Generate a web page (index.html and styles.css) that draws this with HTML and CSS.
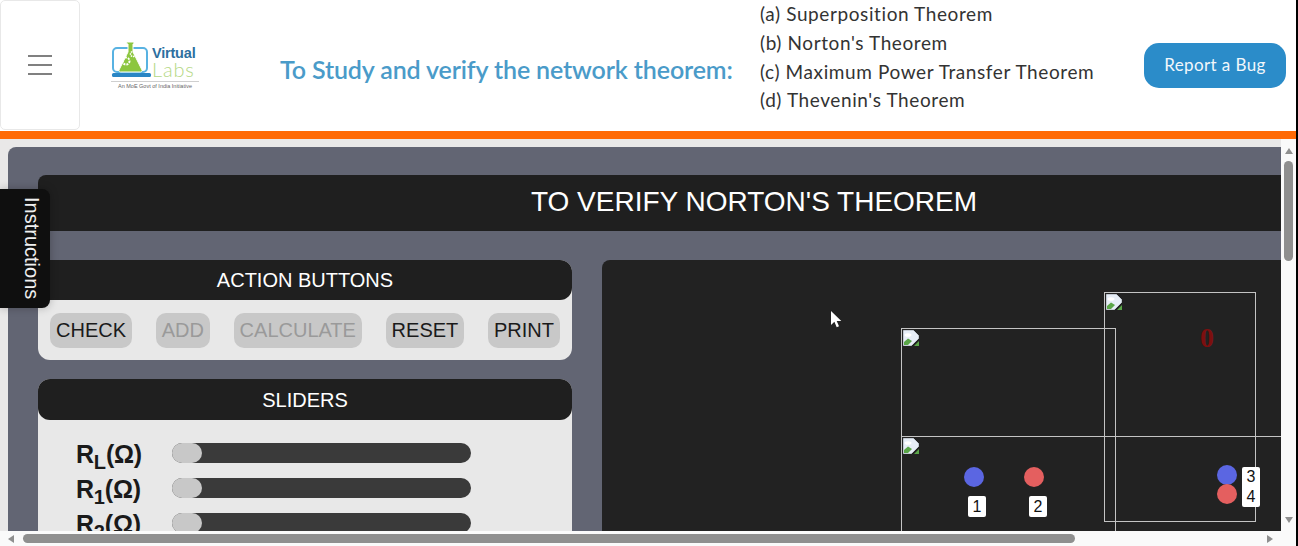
FILE: index.html
```html
<!DOCTYPE html>
<html lang="en">
<head>
    <meta charset="UTF-8">
    <meta name="viewport" content="width=device-width, initial-scale=1.0">
    <title>Virtual Labs - Network Theorems</title>
    <link rel="stylesheet" href="styles.css">
</head>
<body>
    <header class="topbar">
        <button class="menu-btn" aria-label="Menu">
            <span></span><span></span><span></span>
        </button>
        <div class="logo">
            <svg class="logo-mark" width="41" height="36" viewBox="0 0 41 36">
                <rect x="2" y="6" width="34" height="24" rx="4" fill="none" stroke="#58b2e2" stroke-width="2"/>
                <rect x="1" y="31" width="39" height="4" rx="1.500" fill="#2a86c4"/>
                <path d="M15 0h8v2h-1v8l9 18c0.500 1-0.500 2-1.500 2h-20c-1 0-2-1-1.500-2l9-18V2h-1z" fill="#8cc63f" stroke="#fff" stroke-width="1"/>
                <circle cx="15" cy="19" r="3.500" fill="none" stroke="#fff" stroke-width="2" stroke-dasharray="2 1"/>
                <circle cx="22" cy="12" r="2.500" fill="none" stroke="#fff" stroke-width="1.500" stroke-dasharray="1.500 0.800"/>
            </svg>
            <div class="logo-words">
                <span class="logo-virtual">Virtual</span>
                <span class="logo-labs">Labs</span>
            </div>
            <div class="logo-tag">An MoE Govt of India Initiative</div>
        </div>
        <h1 class="exp-title">To Study and verify the network theorem:</h1>
        <ul class="exp-list">
            <li>(a) Superposition Theorem</li>
            <li>(b) Norton's Theorem</li>
            <li>(c) Maximum Power Transfer Theorem</li>
            <li>(d) Thevenin's Theorem</li>
        </ul>
        <a class="bug-btn" href="#">Report a Bug</a>
    </header>
    <div class="orange-line"></div>

    <main class="sim-frame">
        <div class="sim-view">
            <div class="sim-inner">
                <div class="sim-title">TO VERIFY NORTON'S THEOREM</div>
                <div class="sim-cols">
                    <section class="controls">
                        <div class="card">
                            <div class="card-head head-short">ACTION BUTTONS</div>
                            <div class="action-row">
                                <button class="act">CHECK</button>
                                <button class="act off">ADD</button>
                                <button class="act off">CALCULATE</button>
                                <button class="act">RESET</button>
                                <button class="act">PRINT</button>
                            </div>
                        </div>
                        <div class="card">
                            <div class="card-head">SLIDERS</div>
                            <div class="slider-list">
                                <div class="slider-row">
                                    <span class="slider-name">R<sub>L</sub>(Ω)</span>
                                    <div class="track"><div class="thumb"></div></div>
                                </div>
                                <div class="slider-row">
                                    <span class="slider-name">R<sub>1</sub>(Ω)</span>
                                    <div class="track"><div class="thumb"></div></div>
                                </div>
                                <div class="slider-row">
                                    <span class="slider-name">R<sub>2</sub>(Ω)</span>
                                    <div class="track"><div class="thumb"></div></div>
                                </div>
                            </div>
                        </div>
                    </section>

                    <section class="board">
                        <div class="box box-a"><svg class="broken" viewBox="0 0 16 16"><use href="#broken-img"/></svg></div>
                        <div class="box box-b"><svg class="broken" viewBox="0 0 16 16"><use href="#broken-img"/></svg></div>
                        <div class="box box-c"><svg class="broken" viewBox="0 0 16 16"><use href="#broken-img"/></svg></div>
                        <span class="reading">0</span>
                        <span class="pin blue pin-1"></span>
                        <span class="pin red pin-2"></span>
                        <span class="pin blue pin-3"></span>
                        <span class="pin red pin-4"></span>
                        <span class="tag tag-1">1</span>
                        <span class="tag tag-2">2</span>
                        <span class="tag tag-3">3</span>
                        <span class="tag tag-4">4</span>
                        <svg class="cursor" width="12" height="19" viewBox="0 0 12 19">
                            <path d="M1 1v14l3.400-3.200 2.300 5.400 2.300-1-2.300-5.200h4.600z" fill="#fff"/>
                        </svg>
                    </section>
                </div>
            </div>
        </div>
        <div class="instructions"><span>Instructions</span></div>
        <div class="scroll-y">
            <i class="arrow up"></i>
            <div class="scroll-y-track"><div class="scroll-y-thumb"></div></div>
            <i class="arrow down"></i>
        </div>
    </main>
    <div class="scroll-x">
        <i class="arrow left"></i>
        <div class="scroll-x-track"><div class="scroll-x-thumb"></div></div>
        <i class="arrow right"></i>
    </div>

    <svg class="defs" width="0" height="0">
        <symbol id="broken-img" viewBox="0 0 16 16">
            <path d="M0.500 0.500H10.500L15.500 5.500V8.500L8.500 15.500H0.500Z" fill="#e6edf6" stroke="#c3cad3" stroke-width="1"/>
            <ellipse cx="5" cy="5" rx="3.500" ry="1.800" fill="#fff"/>
            <path d="M1 15v-3l4-3.500 4 2.500-4 4z" fill="#5aa648"/>
            <path d="M16 11v5h-5z" fill="#5aa648"/>
        </symbol>
    </svg>
</body>
</html>
```

FILE: styles.css
```css
* {
    box-sizing: border-box;
}
html, body {
    margin: 0;
    height: 546px;
    overflow: hidden;
}
body {
    font-family: "Liberation Sans", Arial, sans-serif;
    background-color: #fff;
    display: flex;
    flex-direction: column;
    width: 1298px;
    border-right: 2px solid #000;
}
ul {
    list-style: none;
    margin: 0;
    padding: 0;
}

/* top header */
.topbar {
    height: 131px;
    flex: none;
    display: flex;
    align-items: center;
    font-family: "Lato", "Open Sans", sans-serif;
}
.menu-btn {
    width: 80px;
    height: 130px;
    flex: none;
    margin: 0 0 1px 0;
    background: #fff;
    border: 1px solid #e8e8e8;
    border-radius: 5px;
    display: flex;
    flex-direction: column;
    justify-content: center;
    align-items: center;
    gap: 7px;
    padding: 0;
}
.menu-btn span {
    display: block;
    width: 24px;
    height: 2px;
    background-color: #808080;
}
.logo {
    width: 88px;
    margin-left: 31px;
    flex: none;
    display: grid;
    grid-template-columns: 41px 1fr;
    font-family: "Liberation Sans", sans-serif;
}
.logo-mark {
    width: 41px;
    height: 36px;
}
.logo-words {
    display: flex;
    flex-direction: column;
    margin-top: 4px;
}
.logo-virtual {
    font-size: 14.500px;
    line-height: 14px;
    font-weight: 700;
    color: #2d6f9f;
    letter-spacing: -0.2px;
}
.logo-labs {
    font-family: "Lato", sans-serif;
    font-size: 20px;
    line-height: 18px;
    font-weight: 300;
    color: #b4d884;
    letter-spacing: 0.8px;
}
.logo-tag {
    grid-column: 1 / 3;
    border-top: 1px solid #cfcfcf;
    margin-top: 3px;
    padding-top: 1px;
    font-size: 5.500px;
    color: #666;
    text-align: center;
    white-space: nowrap;
}
.exp-title {
    margin: 6px 0 0 81px;
    font-size: 25px;
    font-weight: 600;
    color: #4a9bc9;
    width: 480px;
    white-space: nowrap;
    flex: none;
    letter-spacing: -0.13px;
}
.exp-list {
    width: 384px;
    flex: none;
    margin-bottom: 16px;
    font-size: 19px;
    letter-spacing: 0.6px;
    line-height: 28.600px;
    color: #333;
    white-space: nowrap;
}
.bug-btn {
    width: 142px;
    height: 45px;
    flex: none;
    margin-bottom: 1px;
    background-color: #2b8cc9;
    color: #f2f7fb;
    border-radius: 15px;
    font-size: 17px;
    letter-spacing: 0.4px;
    line-height: 43px;
    text-align: center;
    text-decoration: none;
}
.orange-line {
    height: 8px;
    flex: none;
    background-color: #ff6a06;
}

/* simulation frame */
.sim-frame {
    position: relative;
    height: 392px;
    flex: none;
    background-color: #e9e8e8;
    padding: 8px 0 0 8px;
    display: flex;
}
.sim-view {
    flex: 1;
    min-width: 0;
    overflow: hidden;
    border-radius: 8px 0 0 0;
    background-color: #626573;
}
.sim-inner {
    width: 1500px;
    padding: 28px 0 0 30px;
}
.sim-title {
    width: 1432px;
    height: 56px;
    line-height: 54px;
    background-color: #1f1f1f;
    color: #fff;
    font-size: 28px;
    text-align: center;
    border-radius: 8px 8px 0 0;
}
.sim-cols {
    display: flex;
    gap: 30px;
    margin-top: 29px;
}
.controls {
    width: 534px;
    flex: none;
    display: flex;
    flex-direction: column;
    gap: 19px;
}
.card {
    background-color: #e8e8e8;
    border-radius: 12px;
}
.card-head {
    height: 41px;
    line-height: 42px;
    background-color: #1f1f1f;
    color: #fff;
    font-size: 20px;
    text-align: center;
    border-radius: 12px;
}
.head-short {
    height: 40px;
    line-height: 41px;
}
.action-row {
    height: 60px;
    display: flex;
    align-items: center;
    justify-content: space-between;
    padding: 0 12px;
}
.act {
    height: 35px;
    padding: 0 6px;
    border: none;
    border-radius: 10px;
    background-color: #c8c8c8;
    color: #1a1a1a;
    font-family: inherit;
    font-size: 20px;
}
.act.off {
    color: #9a9a9a;
}
.slider-list {
    height: 200px;
    padding-top: 23px;
    display: flex;
    flex-direction: column;
    gap: 15px;
}
.slider-row {
    display: flex;
    align-items: center;
    height: 20px;
}
.slider-name {
    width: 134px;
    flex: none;
    padding-left: 38px;
    font-size: 25px;
    font-weight: 700;
    color: #1a1a1a;
    white-space: nowrap;
    line-height: 20px;
    padding-top: 2px;
    letter-spacing: -0.2px;
}
.slider-name sub {
    font-size: 20px;
    line-height: 0;
}
.track {
    width: 299px;
    height: 20px;
    border-radius: 10px;
    background-color: #3a3a3a;
}
.thumb {
    width: 30px;
    height: 20px;
    border-radius: 10px;
    background-color: #c8c8c8;
}

.board {
    position: relative;
    width: 900px;
    height: 400px;
    flex: none;
    background-color: #222;
    border-radius: 8px 0 0 0;
}
.box {
    position: absolute;
    border: 1px solid #c4c4c4;
}
.box-a {
    left: 299px;
    top: 68px;
    width: 215px;
    height: 300px;
}
.box-b {
    left: 502px;
    top: 32px;
    width: 152px;
    height: 230px;
}
.box-c {
    left: 299px;
    top: 176px;
    width: 600px;
    height: 200px;
}
.broken {
    display: block;
    width: 16px;
    height: 16px;
    margin: 1px 0 0 1px;
}
.reading {
    position: absolute;
    left: 598px;
    top: 62px;
    font-family: "Liberation Serif", serif;
    font-weight: 700;
    font-size: 28px;
    color: #7d0f0f;
}
.pin {
    position: absolute;
    width: 20px;
    height: 20px;
    border-radius: 50%;
}
.blue { background-color: #5b66e2; }
.red { background-color: #e45f5f; }
.pin-1 { left: 362px; top: 207px; }
.pin-2 { left: 422px; top: 207px; }
.pin-3 { left: 615px; top: 205px; }
.pin-4 { left: 615px; top: 224px; }
.tag {
    position: absolute;
    width: 18px;
    height: 21px;
    background-color: #fff;
    color: #111;
    border-radius: 2px;
    font-size: 16px;
    line-height: 21px;
    text-align: center;
}
.tag-1 { left: 366px; top: 236px; }
.tag-2 { left: 427px; top: 236px; }
.tag-3 { left: 640px; top: 207px; height: 20px; line-height: 20px; border-radius: 2px 2px 0 0; }
.tag-4 { left: 640px; top: 227px; height: 20px; line-height: 20px; border-radius: 0 0 2px 2px; }
.cursor {
    position: absolute;
    left: 228px;
    top: 50px;
}

/* instructions tab hangs over the left edge */
.instructions {
    position: absolute;
    left: 0;
    top: 50px;
    width: 50px;
    height: 119px;
    background-color: #0f0f0f;
    border-radius: 0 8px 8px 0;
    box-shadow: 0 0 8px rgba(0, 0, 0, 0.25);
    color: #f0f0f0;
    font-size: 20px;
    display: flex;
    align-items: center;
    justify-content: center;
}
.instructions span {
    writing-mode: vertical-rl;
    margin-left: 13px;
}

/* scrollbars */
.scroll-y {
    width: 15px;
    flex: none;
    background-color: #fafafa;
    margin-top: -8px;
    padding-top: 8px;
    display: flex;
    flex-direction: column;
    align-items: center;
}
.scroll-y-track {
    flex: 1;
    width: 100%;
    padding: 7px 3px 0;
}
.scroll-y-thumb {
    height: 100px;
    border-radius: 5px;
    background-color: #8f8f8f;
}
.scroll-x {
    height: 15px;
    flex: none;
    background-color: #fafafa;
    display: flex;
    align-items: center;
    padding: 0 23px 0 8px;
}
.scroll-x-track {
    flex: 1;
    padding: 0 4px 0 9px;
}
.scroll-x-thumb {
    width: 1052px;
    height: 9px;
    border-radius: 5px;
    background-color: #8f8f8f;
}
.arrow {
    display: block;
    width: 0;
    height: 0;
    flex: none;
    border-style: solid;
    border-color: transparent;
}
.arrow.up {
    margin-top: 1px;
    border-width: 0 4.500px 6px;
    border-bottom-color: #8f8f8f;
}
.arrow.down {
    margin-bottom: 8px;
    border-width: 6px 4.500px 0;
    border-top-color: #8f8f8f;
}
.arrow.left {
    border-width: 4.500px 6px 4.500px 0;
    border-right-color: #8f8f8f;
}
.arrow.right {
    border-width: 4.500px 0 4.500px 6px;
    border-left-color: #8f8f8f;
}
.defs {
    position: absolute;
}
```
